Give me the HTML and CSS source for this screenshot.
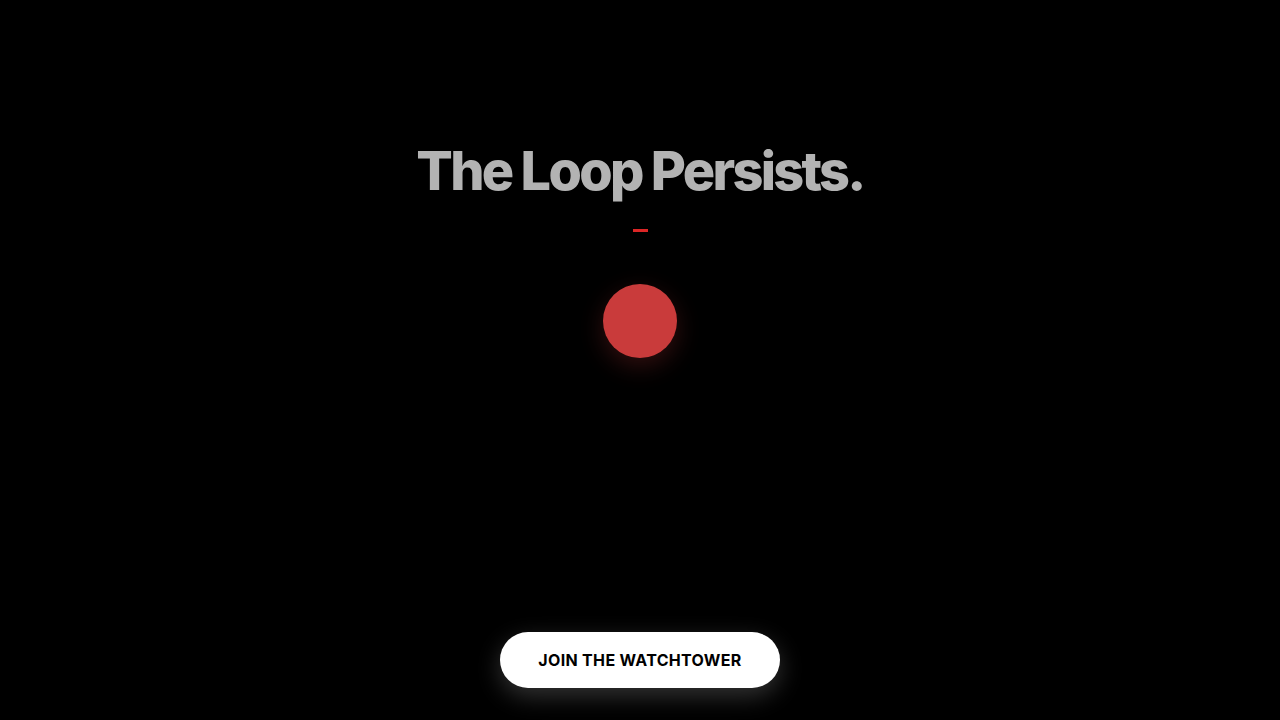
FILE: index.html
```html
<!DOCTYPE html>
<html lang="en">
<head>
<meta charset="utf-8">
<title>The Loop Persists.</title>
<link rel="stylesheet" href="styles.css">
</head>
<body>
<main class="page">
  <section class="hero">
    <h1 class="title">The Loop Persists.</h1>
    <span class="dash"></span>
    <span class="orb"></span>
  </section>
  <a class="cta" href="#">JOIN THE WATCHTOWER</a>
</main>
</body>
</html>
```
FILE: styles.css
```css
* { box-sizing: border-box; }
html, body { margin: 0; padding: 0; background: #000; }
body { font-family: Inter, "Noto Sans", sans-serif; }
.page {
  height: 100vh;
  display: flex;
  flex-direction: column;
  align-items: center;
}
.hero {
  display: flex;
  flex-direction: column;
  align-items: center;
  padding-top: 144px;
}
.title {
  margin: 0;
  font-size: 54px;
  line-height: 1;
  font-weight: 800;
  letter-spacing: -0.05em;
  color: #b3b3b3;
}
.dash {
  display: block;
  width: 15px;
  height: 3px;
  background: #dc2626;
  margin-top: 31px;
}
.orb {
  display: block;
  width: 74px;
  height: 74px;
  border-radius: 50%;
  background: #c93b3b;
  margin-top: 52px;
  box-shadow: 0 8px 24px rgba(201, 59, 59, 0.25);
}
.cta {
  margin-top: auto;
  margin-bottom: 32px;
  width: 280px;
  height: 56px;
  border-radius: 28px;
  background: #fff;
  color: #000;
  text-decoration: none;
  font-size: 16px;
  font-weight: 700;
  letter-spacing: 0.02em;
  display: flex;
  align-items: center;
  justify-content: center;
  box-shadow: 0 8px 24px rgba(255, 255, 255, 0.2);
}
```
